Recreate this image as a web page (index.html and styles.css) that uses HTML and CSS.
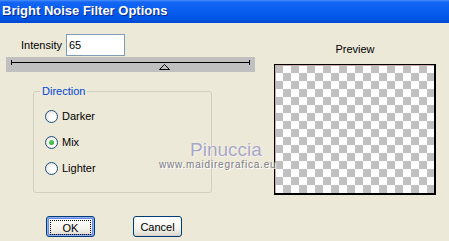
FILE: index.html
```html
<!DOCTYPE html>
<html lang="en">
<head>
    <meta charset="UTF-8">
    <title>Bright Noise Filter Options</title>
    <link rel="stylesheet" href="styles.css">
</head>
<body>

    <div class="window">
        <div class="titlebar">Bright Noise Filter Options</div>

        <div class="client">
            <!-- Left side: settings -->
            <div class="settings">
                <div class="intensity-row">
                    <label for="intensity" class="field-label">Intensity</label>
                    <input type="text" id="intensity" class="num-input" value="65">
                </div>

                <div class="slider">
                    <svg width="249" height="15" viewBox="0 0 249 15">
                        <line x1="5" y1="5.5" x2="244" y2="5.5" stroke="#000" stroke-width="1"/>
                        <line x1="5.5" y1="3" x2="5.5" y2="8" stroke="#000" stroke-width="1"/>
                        <line x1="243.5" y1="3" x2="243.5" y2="8" stroke="#000" stroke-width="1"/>
                        <polygon points="158.5,7.5 153.5,12.5 163.5,12.5" fill="#c0c0c0" stroke="#000" stroke-width="1"/>
                    </svg>
                </div>

                <fieldset class="group">
                    <legend class="group-title">Direction</legend>
                    <label class="radio"><span class="radio-dot"></span>Darker</label>
                    <label class="radio"><span class="radio-dot checked"></span>Mix</label>
                    <label class="radio"><span class="radio-dot"></span>Lighter</label>
                </fieldset>

                <div class="buttons">
                    <button class="btn btn-default"><span class="focus-ring">OK</span></button>
                    <button class="btn">Cancel</button>
                </div>
            </div>

            <!-- Right side: preview -->
            <div class="preview-col">
                <div class="preview-label">Preview</div>
                <div class="preview"></div>
            </div>
        </div>

        <!-- watermark over the dialog -->
        <div class="watermark">
            <span class="wm-name">Pinuccia</span>
            <span class="wm-url">www.maidiregrafica.eu</span>
        </div>
    </div>

</body>
</html>
```

FILE: styles.css
```css
body {
    margin: 0;
    font-family: "Liberation Sans", Arial, sans-serif;
    font-size: 11px;
    color: #000;
}

/* Dialog window */
.window {
    position: relative;
    width: 449px;
    height: 241px;
    background-color: #ece9d8;
    overflow: hidden;
}

/* XP style caption */
.titlebar {
    height: 23px;
    box-sizing: border-box;
    padding: 3px 0 0 2px;
    line-height: 16px;
    font-size: 13px;
    font-weight: bold;
    color: #fff;
    text-shadow: 1px 1px 0 #0a2a8a;
    background: linear-gradient(to bottom, #4a8ef8 0, #1466f4 2px, #0a5ef0 40%, #0056e6 80%, #0048d0 100%);
}

.client {
    display: flex;
    height: 218px;
}

/* Settings column */
.settings {
    width: 249px;
    margin-left: 6px;
}

.intensity-row {
    display: flex;
    align-items: center;
    margin-top: 11px;
    padding-left: 15px;
    gap: 4px;
}

.num-input {
    width: 59px;
    height: 22px;
    box-sizing: border-box;
    border: 1px solid #7f9db9;
    padding: 0 2px;
    font-family: inherit;
    font-size: 11px;
    background: #fff;
    outline: none;
}

.slider {
    height: 15px;
    margin-top: 1px;
    background-color: #c0c0c0;
}

.slider svg {
    display: block;
}

/* Group box */
.group {
    width: 179px;
    box-sizing: border-box;
    margin: 13px 0 0 27px;
    padding: 5px 8px 11px 11px;
    border: 1px solid #d0d0bf;
    border-radius: 3px;
    min-width: 0;
}

.group-title {
    margin-left: -5px;
    padding: 0 2px;
    line-height: 13px;
    color: #0046d5;
}

.radio {
    display: flex;
    align-items: center;
    height: 26px;
    gap: 4px;
}

.radio-dot {
    width: 13px;
    height: 13px;
    box-sizing: border-box;
    border: 1px solid #1c5180;
    border-radius: 50%;
    background: radial-gradient(circle at 60% 60%, #ffffff 30%, #e4e3dc 80%, #cfcdc2 100%);
    display: flex;
    align-items: center;
    justify-content: center;
}

.radio-dot.checked::after {
    content: "";
    width: 5px;
    height: 5px;
    border-radius: 50%;
    background: radial-gradient(circle at 40% 40%, #5ed15e, #21a121);
}

/* Buttons */
.buttons {
    display: flex;
    gap: 38px;
    margin: 23px 0 0 40px;
}

.btn {
    width: 49px;
    height: 21px;
    padding: 0;
    border: 1px solid #003c74;
    border-radius: 3px;
    font-family: inherit;
    font-size: 11px;
    color: #000;
    background: linear-gradient(to bottom, #ffffff 0, #f4f3ee 60%, #e3e0d4 90%, #d6d0c5 100%);
}

.btn-default {
    box-shadow: inset 0 0 0 1px #8cb0f8, inset 0 0 0 2px #6a8ee8;
}

.focus-ring {
    display: flex;
    align-items: center;
    justify-content: center;
    margin: 3px;
    height: 13px;
    border: 1px dotted #000;
}

/* Preview column */
.preview-col {
    width: 162px;
    margin-left: 19px;
    padding-top: 20px;
}

.preview-label {
    text-align: center;
    line-height: 13px;
}

.preview {
    margin-top: 8px;
    height: 131px;
    box-sizing: border-box;
    border: 1px solid #000;
    border-right-width: 2px;
    border-bottom-width: 2px;
    box-shadow: inset 1px 1px 0 #c8aaa8;
    background-color: #fff;
    background-image: conic-gradient(#fff 25%, #c0c0c0 0 50%, #fff 0 75%, #c0c0c0 0);
    background-size: 16px 16px;
}

/* Watermark text laid over the dialog */
.watermark {
    position: absolute;
    left: 159px;
    top: 140px;
    display: flex;
    flex-direction: column;
}

.wm-name {
    margin-left: 31px;
    font-size: 19px;
    line-height: 19px;
    color: #a7a6c2;
    text-shadow: 0 0 1px #fff, 1px 1px 0 #f4f2ea;
}

.wm-url {
    margin-top: 1px;
    font-size: 10px;
    line-height: 10px;
    letter-spacing: 0.8px;
    color: #7c7c88;
    text-shadow: 1px 1px 0 #fff;
}
```
